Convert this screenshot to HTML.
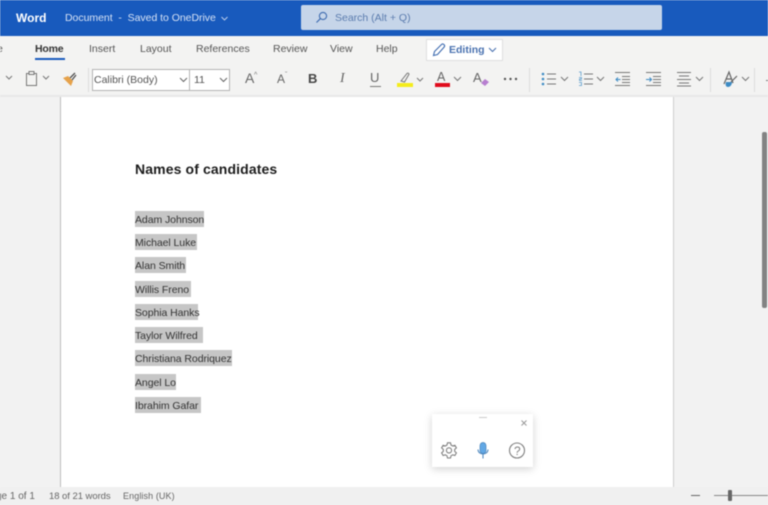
<!DOCTYPE html>
<html>
<head>
<meta charset="utf-8">
<style>
html,body{margin:0;padding:0}
body{width:768px;height:505px;overflow:hidden;background:#f2f2f2;font-family:"Liberation Sans",sans-serif;position:relative}
#w{position:absolute;left:0;top:0;width:768px;height:505px;overflow:hidden;filter:blur(.45px)}
.a{position:absolute;white-space:nowrap}
.t{color:#555;font-size:10.5px;line-height:14px;top:42px}
.hl{position:absolute;left:135px;height:16px;background:#c6c6c6;color:#333;font-size:10.5px;line-height:18px;white-space:nowrap;letter-spacing:-.07px}
svg{position:absolute;overflow:visible}
.sep{position:absolute;top:68px;width:1px;height:24px;background:#dcdcdc}
</style>
</head>
<body>
<div id="w">
<!-- title bar -->
<div class="a" style="left:0;top:0;width:768px;height:36px;background:#185abd"></div>
<div class="a" style="left:16px;top:11px;color:#fff;font-size:12px;font-weight:bold;line-height:15px">Word</div>
<div class="a" style="left:65px;top:11px;color:#d6e2f5;font-size:10.5px;line-height:15px;letter-spacing:-.03px">Document &nbsp;-&nbsp; Saved to OneDrive</div>
<svg style="left:221px;top:16px" width="7" height="5"><path d="M.5 1l3 3 3-3" fill="none" stroke="#c4d4ee" stroke-width=".9"/></svg>
<div class="a" style="left:301px;top:5px;width:361px;height:25px;background:#c6d5e9;border-radius:2px"></div>
<svg style="left:315px;top:11px" width="13" height="13"><circle cx="8" cy="5" r="3.600" fill="none" stroke="#3f6cb0" stroke-width="1.100"/><path d="M5.400 7.600L1.500 11.500" stroke="#3f6cb0" stroke-width="1.200"/></svg>
<div class="a" style="left:335px;top:11px;color:#5b7cae;font-size:10.500px;line-height:15px">Search (Alt + Q)</div>

<!-- ribbon -->
<div class="a" style="left:0;top:36px;width:768px;height:60px;background:#f3f3f2"></div>
<div class="a" style="left:0;top:95px;width:768px;height:2px;background:#e8e8e8"></div>
<div class="a t" style="left:-3px">e</div>
<div class="a t" style="left:35px;color:#333;font-weight:bold;letter-spacing:-.2px">Home</div>
<div class="a" style="left:35px;top:58px;width:30px;height:2px;background:#185abd"></div>
<div class="a t" style="left:89px">Insert</div>
<div class="a t" style="left:140px">Layout</div>
<div class="a t" style="left:196px">References</div>
<div class="a t" style="left:273px">Review</div>
<div class="a t" style="left:330px">View</div>
<div class="a t" style="left:376px">Help</div>
<!-- editing -->
<div class="a" style="left:426px;top:39px;width:75px;height:20px;background:#fff;border:1px solid #dfdfdf"></div>
<svg style="left:432px;top:43px" width="14" height="14"><path d="M1.500 12.500l1-4L9.500 1.500c.8-.7 1.800-.6 2.500.1s.8 1.700.1 2.500L5.500 11.500z" fill="none" stroke="#3f6cb0" stroke-width="1.100"/></svg>
<div class="a" style="left:449px;top:43px;color:#4a72b0;font-size:10.500px;font-weight:bold;line-height:14px">Editing</div>
<svg style="left:488px;top:47px" width="9" height="6"><path d="M1 1l3.500 3.500L8 1" fill="none" stroke="#4a72b0" stroke-width="1.100"/></svg>

<!-- toolbar left -->
<svg style="left:0;top:70px" width="60" height="18" fill="none" stroke="#777">
<path d="M6 6l3 3 3-3"/>
<rect x="26.500" y="3.500" width="10" height="12"/><rect x="29" y="1.500" width="5" height="3" fill="#f3f3f2"/>
<path d="M43 6l3 3 3-3"/>
</svg>
<svg style="left:62px;top:71px" width="16" height="16"><path d="M1 7l5-2 5 5-2 5z" fill="#e6a24a"/><path d="M8 7l5-5M10 9l4-5" stroke="#555" stroke-width="1.400"/></svg>
<div class="sep" style="left:88px"></div>
<div class="a" style="left:92px;top:69px;width:97px;height:20px;background:#fff;border:1px solid #b4b4b4"></div>
<div class="a" style="left:189px;top:69px;width:39px;height:20px;background:#fff;border:1px solid #b4b4b4"></div>
<div class="a" style="left:94px;top:73px;color:#555;font-size:10.500px;line-height:14px">Calibri (Body)</div>
<div class="a" style="left:194px;top:73px;color:#555;font-size:10.500px;line-height:14px">11</div>
<svg style="left:179px;top:77px" width="9" height="6"><path d="M1 1l3.500 3.500L8 1" fill="none" stroke="#666"/></svg>
<svg style="left:219px;top:77px" width="9" height="6"><path d="M1 1l3.500 3.500L8 1" fill="none" stroke="#666"/></svg>
<div class="a" style="left:245px;top:70px;color:#666;font-size:14px;line-height:17px">A</div>
<div class="a" style="left:254px;top:71px;color:#777;font-size:7px;line-height:9px">^</div>
<div class="a" style="left:277px;top:72px;color:#666;font-size:12px;line-height:15px">A</div>
<div class="a" style="left:285px;top:71px;color:#777;font-size:7px;line-height:9px">ˇ</div>
<div class="a" style="left:308px;top:71px;color:#444;font-size:13px;font-weight:bold;line-height:16px">B</div>
<div class="a" style="left:340px;top:71px;color:#666;font-family:'Liberation Serif',serif;font-style:italic;font-size:14px;line-height:16px">I</div>
<div class="a" style="left:370px;top:70px;color:#666;font-size:13px;line-height:16px">U</div>
<div class="a" style="left:370px;top:86px;width:11px;height:1px;background:#777"></div>

<!-- highlight -->
<svg style="left:397px;top:71px" width="26" height="18" fill="none">
<path d="M4 10L10 2.500c.8-.8 2-.2 2 .8L7.500 11z" stroke="#777"/>
<rect x="0" y="12" width="16" height="4" fill="#f4ec1c"/>
<path d="M20 7l3 3 3-3" stroke="#777"/>
</svg>
<div class="a" style="left:437px;top:70px;color:#666;font-size:12.500px;line-height:15px">A</div>
<div class="a" style="left:435px;top:83px;width:15px;height:4px;background:#e00b1c"></div>
<svg style="left:453px;top:76px" width="9" height="6"><path d="M1 1l3.500 3.500L8 1" fill="none" stroke="#777"/></svg>
<div class="a" style="left:473px;top:70px;color:#666;font-size:13px;line-height:16px">A</div>
<svg style="left:480px;top:78px" width="10" height="9"><path d="M1 5l4-4 4 3-4 4z" fill="#b77fd0"/></svg>
<svg style="left:503px;top:77px" width="15" height="4" fill="#555"><circle cx="2" cy="2" r="1.200"/><circle cx="7.500" cy="2" r="1.200"/><circle cx="13" cy="2" r="1.200"/></svg>
<div class="sep" style="left:529px"></div>

<!-- lists -->
<svg style="left:541px;top:71px" width="28" height="16" fill="none">
<circle cx="2" cy="3" r="1.300" fill="#3d8bc4"/><circle cx="2" cy="8" r="1.300" fill="#3d8bc4"/><circle cx="2" cy="13" r="1.300" fill="#3d8bc4"/>
<path d="M6 3h9M6 8h9M6 13h9" stroke="#777"/>
<path d="M20 6l3.500 3.500L27 6" stroke="#777"/>
</svg>
<svg style="left:578px;top:71px" width="28" height="16" fill="none">
<path d="M1 1h2v4M1 6.500h2.500v1.500h-2v1.500h2.500M1 11.500h2.500v3h-2.500" stroke="#5a9ccc" stroke-width=".8"/>
<path d="M6 3h9M6 8h9M6 13h9" stroke="#777"/>
<path d="M19 6l3.500 3.500L26 6" stroke="#777"/>
</svg>
<svg style="left:615px;top:71px" width="15" height="16" fill="none">
<path d="M0 1.500h15M7 5.500h8M7 8.500h8M7 11.500h8M0 14.500h15" stroke="#777"/>
<path d="M5.500 8.500H1M3 6.500L1 8.500l2 2" stroke="#3d8bc4"/>
</svg>
<svg style="left:646px;top:71px" width="15" height="16" fill="none">
<path d="M0 1.500h15M7 5.500h8M7 8.500h8M7 11.500h8M0 14.500h15" stroke="#777"/>
<path d="M0 8.500h5M3.500 6.500l2 2-2 2" stroke="#3d8bc4"/>
</svg>
<svg style="left:677px;top:71px" width="28" height="16" fill="none">
<path d="M0 1.500h14M2 5h10M0 8.500h14M2 12h10M0 15h14" stroke="#777"/>
<path d="M19 6l3.500 3.500L26 6" stroke="#777"/>
</svg>
<div class="sep" style="left:710px"></div>
<svg style="left:723px;top:71px" width="30" height="18" fill="none">
<path d="M1 13L6 1l4 11M3 8h5" stroke="#666" stroke-width="1.200"/>
<path d="M8 11l6-6" stroke="#666" stroke-width="1.200"/>
<path d="M3 11h6c0 3-2 5-4 5s-3-2-2-5z" fill="#3d8bc4"/>
<path d="M19 6l3.500 3.500L26 6" stroke="#777"/>
</svg>
<div class="sep" style="left:754px"></div>
<div class="a" style="left:766px;top:80px;width:2px;height:1px;background:#777"></div>

<!-- canvas -->
<div class="a" style="left:0;top:97px;width:60px;height:390px;background:#f2f2f2"></div>
<div class="a" style="left:60px;top:97px;width:1px;height:390px;background:#bdbdbd"></div>
<div class="a" style="left:61px;top:97px;width:612px;height:390px;background:#fff"></div>
<div class="a" style="left:673px;top:97px;width:1px;height:390px;background:#cfcfcf"></div>
<div class="a" style="left:762px;top:132px;width:5px;height:176px;background:#838383;border-radius:2px"></div>

<!-- document -->
<div class="a" style="left:135px;top:160px;color:#1c1c1c;font-size:14px;font-weight:bold;line-height:18px;letter-spacing:.12px">Names of candidates</div>
<div class="hl" style="top:211px;width:69px">Adam Johnson</div>
<div class="hl" style="top:234px;width:62px">Michael Luke</div>
<div class="hl" style="top:257px;width:51px">Alan Smith</div>
<div class="hl" style="top:281px;width:56px">Willis Freno</div>
<div class="hl" style="top:304px;width:63px">Sophia Hanks</div>
<div class="hl" style="top:327px;width:68px">Taylor Wilfred</div>
<div class="hl" style="top:350px;width:97px">Christiana Rodriquez</div>
<div class="hl" style="top:374px;width:41px">Angel Lo</div>
<div class="hl" style="top:397px;width:66px">Ibrahim Gafar</div>

<!-- dictation -->
<div class="a" style="left:432px;top:414px;width:101px;height:53px;background:#fff;box-shadow:0 2px 8px rgba(0,0,0,.18)"></div>
<div class="a" style="left:479px;top:417px;width:8px;height:1px;background:#ccc"></div>
<svg style="left:521px;top:420px" width="6" height="6"><path d="M.5.500l5 5M5.500.500l-5 5" stroke="#999"/></svg>
<svg style="left:441px;top:442px" width="16" height="16" fill="none" stroke="#808080" stroke-width="1.100">
<path d="M6.500.800h3l.5 2.200 1.700 1 2.200-.7 1.500 2.600-1.700 1.500v2l1.700 1.500-1.500 2.600-2.200-.7-1.700 1-.5 2.200h-3l-.5-2.200-1.700-1-2.200.7L.600 10.900l1.700-1.500v-2L.600 5.900l1.500-2.600 2.200.7 1.700-1z"/>
<circle cx="8" cy="8.400" r="2.600"/>
</svg>
<svg style="left:477px;top:442px" width="12" height="17" fill="none">
<rect x="3" y="0.500" width="6" height="11" rx="3" fill="#62a8e5" stroke="#4a85bd" stroke-width=".7"/>
<path d="M1 7.500c0 6 10 6 10 0" stroke="#4a85bd"/>
<path d="M6 12.500v4" stroke="#4a85bd"/>
</svg>
<svg style="left:509px;top:442px" width="17" height="17" fill="none"><circle cx="8" cy="8.500" r="7.500" stroke="#808080" stroke-width="1.100"/></svg>
<div class="a" style="left:514px;top:444px;color:#808080;font-size:12px;line-height:14px">?</div>

<!-- status -->
<div class="a" style="left:0;top:487px;width:768px;height:18px;background:#f0f0f0"></div>
<div class="a" style="left:-4px;top:490px;color:#666;font-size:10px;line-height:13px">ge 1 of 1</div>
<div class="a" style="left:49px;top:490px;color:#666;font-size:9.500px;line-height:13px;letter-spacing:-.05px">18 of 21 words</div>
<div class="a" style="left:123px;top:490px;color:#666;font-size:9px;line-height:13px;letter-spacing:.1px">English (UK)</div>
<div class="a" style="left:691px;top:495px;width:9px;height:1px;background:#666"></div>
<div class="a" style="left:714px;top:495px;width:54px;height:1px;background:#888"></div>
<div class="a" style="left:728px;top:490px;width:4px;height:11px;background:#666;border-radius:1px"></div>
</div>
</body>
</html>
